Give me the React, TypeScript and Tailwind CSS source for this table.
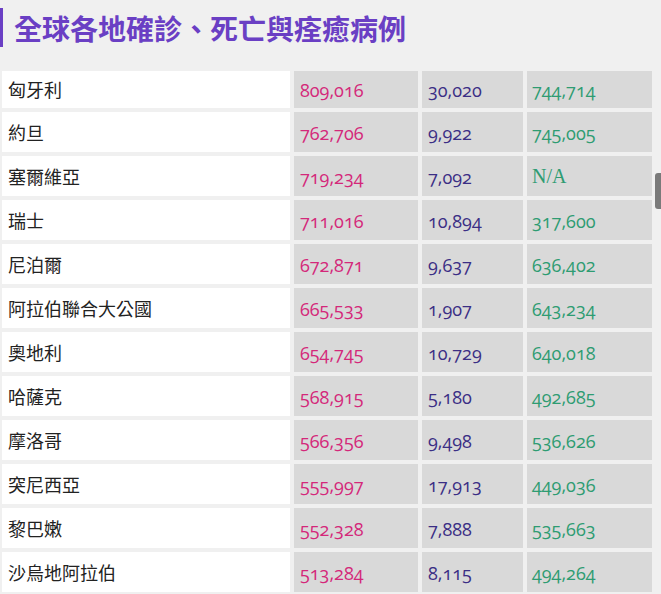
const rows: [string, string, string, string][] = [
  ['匈牙利', '809,016', '30,020', '744,714'],
  ['約旦', '762,706', '9,922', '745,005'],
  ['塞爾維亞', '719,234', '7,092', 'N/A'],
  ['瑞士', '711,016', '10,894', '317,600'],
  ['尼泊爾', '672,871', '9,637', '636,402'],
  ['阿拉伯聯合大公國', '665,533', '1,907', '643,234'],
  ['奧地利', '654,745', '10,729', '640,018'],
  ['哈薩克', '568,915', '5,180', '492,685'],
  ['摩洛哥', '566,356', '9,498', '536,626'],
  ['突尼西亞', '555,997', '17,913', '449,036'],
  ['黎巴嫩', '552,328', '7,888', '535,663'],
  ['沙烏地阿拉伯', '513,284', '8,115', '494,264'],
]

const numFont = "font-['Open_Sans','Noto_Sans',sans-serif] oldstyle-nums text-[18px]"
const naFont = "font-['Liberation_Serif',serif] text-[20px]"

export default function App() {
  return (
    <div className="relative w-[661px] h-[594px] overflow-hidden bg-[#f0f0f0] font-['Noto_Sans_CJK_TC','Noto_Sans',sans-serif]">
      <div className="mt-[8px] h-[39px] border-l-[3px] border-[#6a3fc4] pl-[11px] flex items-center">
        <h1 className="text-[28px] leading-none font-bold text-[#6a3fc4]">
          全球各地確診、死亡與痊癒病例
        </h1>
      </div>

      <div className="mt-[24px] ml-[2px] grid grid-cols-[288px_124px_101px_125px] gap-x-[4px] gap-y-[4px]">
        {rows.map(([name, cases, deaths, recovered], i) => {
          const h = i === 0 ? 'h-[37px]' : 'h-[40px]'
          return (
            <div key={name} className="contents">
              <div className={`${h} bg-white flex items-center pl-[6px] text-[18px] text-[#222]`}>{name}</div>
              <div className={`${h} bg-[#d9d9d9] flex items-center pl-[6px] pt-[2px] ${numFont} text-[#d4287a]`}>{cases}</div>
              <div className={`${h} bg-[#d9d9d9] flex items-center pl-[6px] pt-[2px] ${numFont} text-[#3b2e85]`}>{deaths}</div>
              <div
                className={`${h} bg-[#d9d9d9] flex items-center pl-[5px] text-[#2e9c72] ${
                  recovered === 'N/A' ? naFont : `${numFont} pt-[2px]`
                }`}
              >
                {recovered}
              </div>
            </div>
          )
        })}
      </div>

      {/* scrollbar thumb */}
      <div className="absolute right-0 top-[173px] w-[6px] h-[36px] rounded-l-[3px] bg-[#7a7a7a]" />
    </div>
  )
}
